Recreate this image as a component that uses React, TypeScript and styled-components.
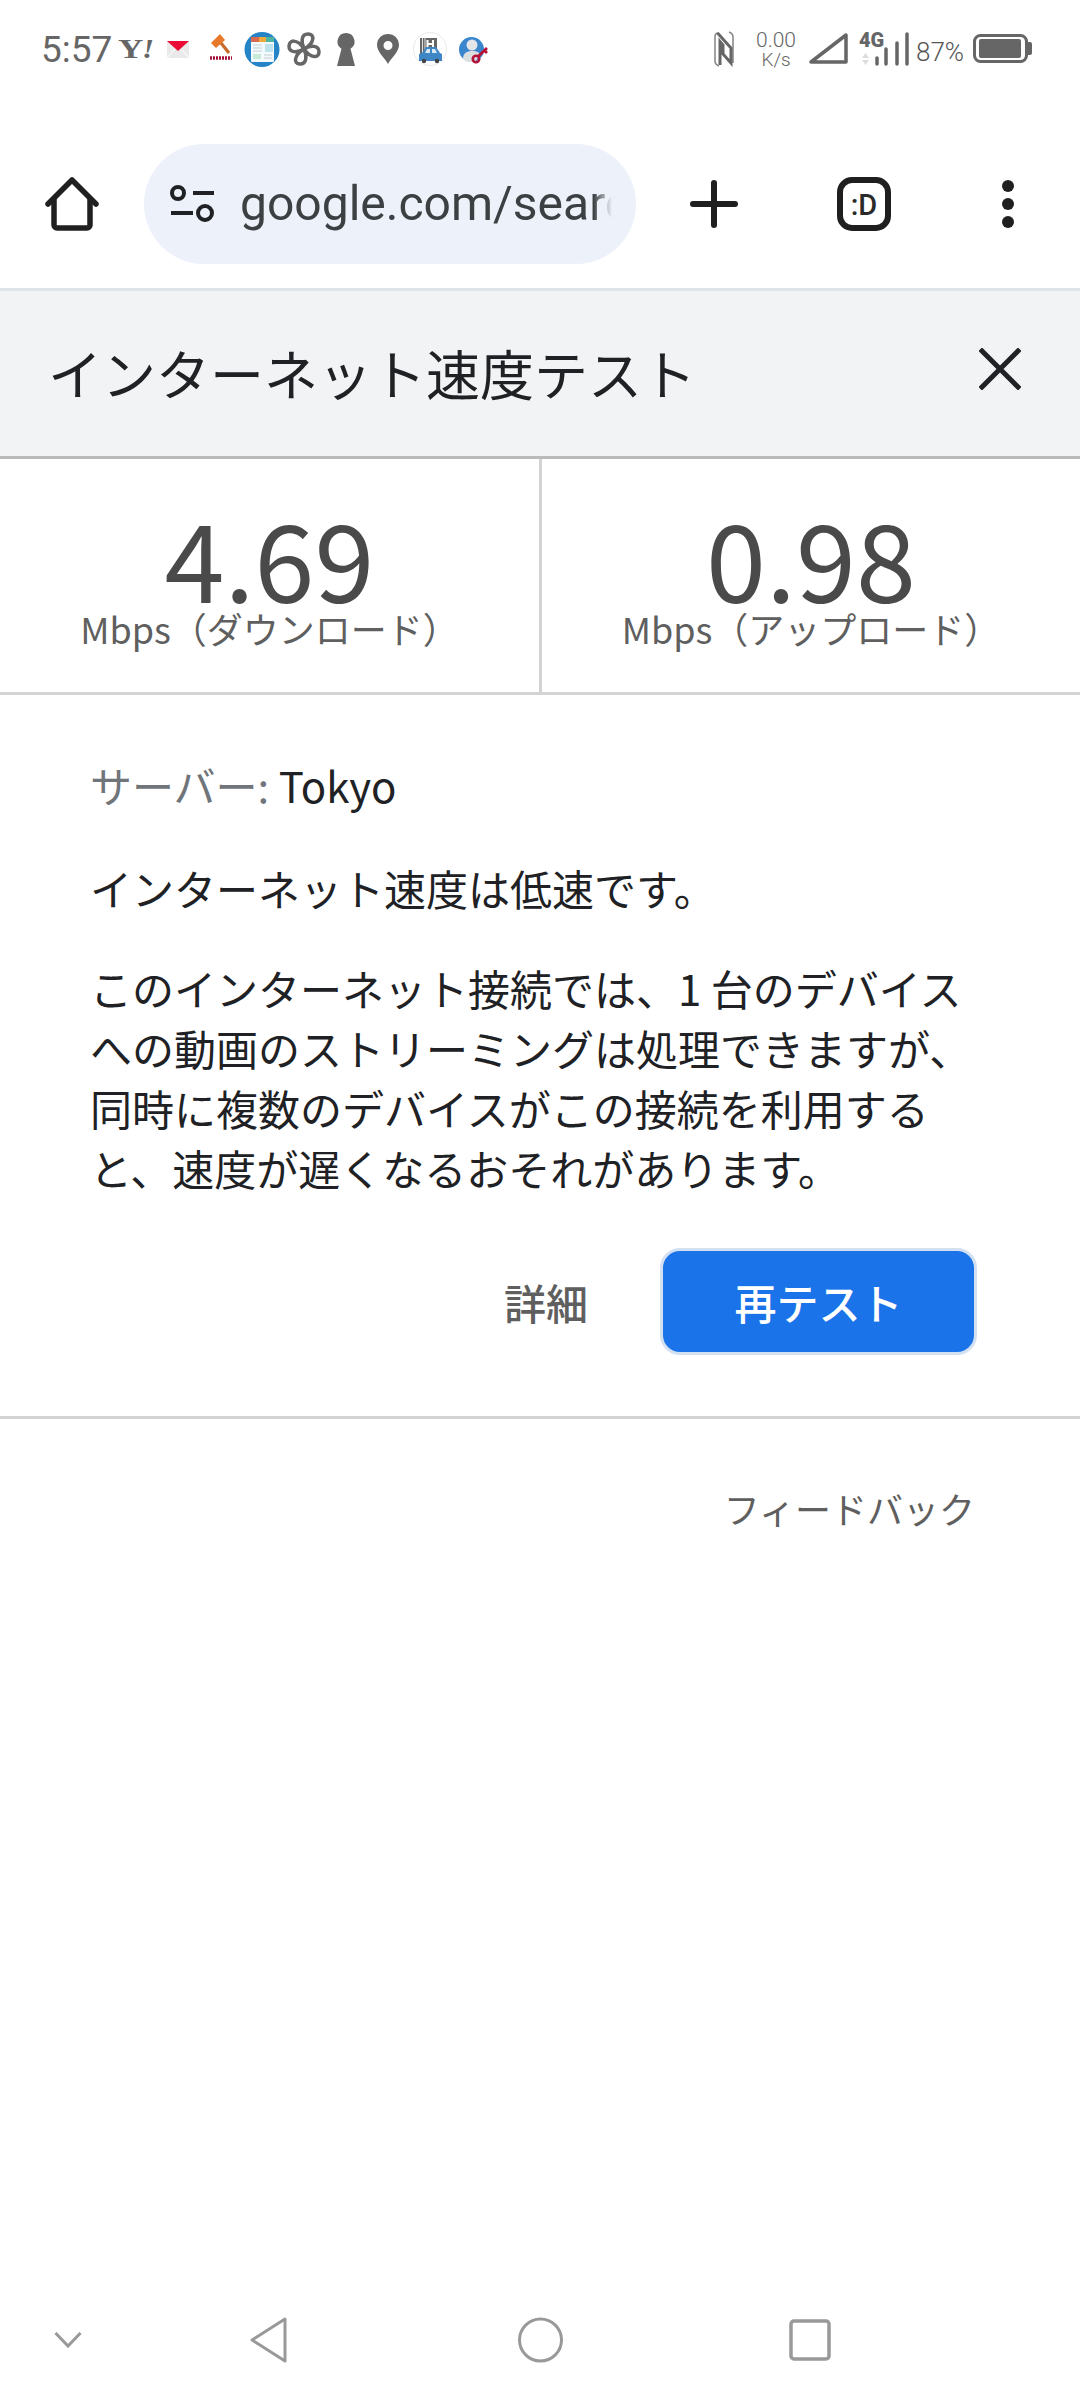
import React from "react";
import styled, { createGlobalStyle } from "styled-components";

const Global = createGlobalStyle`
  html, body { margin: 0; padding: 0; background: #fff; }
  body { font-family: "Noto Sans CJK JP", sans-serif; }
`;
const CJK = `"Noto Sans CJK JP", sans-serif`;
const ROBOTO = `"Roboto", "Noto Sans CJK JP", sans-serif`;

const Page = styled.div`
  width: 1080px; height: 2400px; display: flex; flex-direction: column; background: #fff; overflow: hidden;
`;
const StatusBar = styled.div`
  height: 100px; box-sizing: border-box; padding: 28px 48px 0 41px; display: flex; align-items: flex-start; flex-shrink: 0;
`;
const Time = styled.span`
  font: 400 37px/44px ${ROBOTO}; width: 75px; color: #666; flex-shrink: 0; white-space: nowrap;
`;
const StatusIcon = styled.svg<{ $gap?: number }>`
  flex-shrink: 0; margin-left: ${(p) => p.$gap ?? 0}px; display: block;
`;
const Spacer = styled.div` flex: 1; `;
const Speed = styled.div`
  width: 44px; margin-left: 20px; flex-shrink: 0; text-align: center; font: 300 21px/20px ${ROBOTO}; color: #666; display: flex; flex-direction: column; padding-top: 2px;
  span:last-child { font-size: 19px; line-height: 20px; }
`;
const Percent = styled.span`
  font: 300 26px/44px ${ROBOTO}; color: #555; width: 50px; margin-left: 7px; margin-right: 7px; flex-shrink: 0; padding-top: 2px; white-space: nowrap;
`;
const Toolbar = styled.div`
  height: 191px; box-sizing: border-box; padding: 44px 0 24px 0; display: flex; align-items: center; border-bottom: 3px solid #dde3e9; flex-shrink: 0;
`;
const IconButton = styled.div<{ $w: number }>`
  width: ${(p) => p.$w}px; height: 120px; display: flex; align-items: center; justify-content: center; flex-shrink: 0;
`;
const Omnibox = styled.div`
  width: 492px; height: 120px; border-radius: 60px; background: #edf1f9; display: flex; align-items: center; padding: 0 24px 0 26px; box-sizing: border-box; flex-shrink: 0;
`;
const TuneIcon = styled.svg` flex-shrink: 0; `;
const Url = styled.div`
  margin-left: 26px; font: 400 48px/60px ${ROBOTO}; color: #3c4043; white-space: nowrap; overflow: hidden; flex: 1;
  -webkit-mask-image: linear-gradient(to right, #000 95%, transparent 100%);
`;
const Header = styled.div`
  height: 165px; background: #f1f3f4; border-bottom: 3px solid #b8babb; display: flex; align-items: center; justify-content: space-between; padding: 0 59px 0 48px; flex-shrink: 0;
`;
const HeaderTitle = styled.div`
  font: 400 54px/70px ${CJK}; color: #202124; white-space: nowrap; margin-bottom: 2px;
`;
const CloseIcon = styled.svg` margin-bottom: 10px; `;
const Stats = styled.div`
  height: 233px; display: grid; grid-template-columns: 542px 1fr; border-bottom: 3px solid #d3d3d3; flex-shrink: 0;
`;
const Stat = styled.div<{ $divider?: boolean }>`
  display: flex; flex-direction: column; align-items: center; border-right: ${(p) => (p.$divider ? "3px solid #d3d3d3" : "none")}; box-sizing: border-box;
`;
const StatValue = styled.div`
  font: 400 108px/112px ${CJK}; color: #4a4a4a; margin-top: 41px; height: 112px;
`;
const StatLabel = styled.div`
  font: 400 36px/44px ${CJK}; color: #5f5f5f; margin-top: -6px; white-space: nowrap;
`;
const Body = styled.div`
  padding: 0 90px; border-bottom: 3px solid #d3d3d3; height: 724px; box-sizing: border-box; flex-shrink: 0; display: flex; flex-direction: column;
`;
const Server = styled.div`
  margin-top: 60px; font: 400 42px/60px ${CJK}; color: #202124; white-space: nowrap;
  span { color: #70757a; }
`;
const Para = styled.div<{ $top: number }>`
  margin-top: ${(p) => p.$top}px; font: 400 42px/60px ${CJK}; color: #202124; white-space: pre; 
`;
const Actions = styled.div`
  margin-top: 50px; margin-right: 13px; display: flex; align-items: center; justify-content: flex-end;
`;
const Details = styled.div`
  font: 500 42px/60px ${CJK}; color: #5f5f5f; margin-right: 72px;
`;
const Retest = styled.div`
  width: 317px; height: 107px; box-sizing: border-box; border-radius: 20px; background: #1a73e8; border: 3px solid #d3e0f2; color: #fff; font: 500 42px/60px ${CJK}; display: flex; align-items: center; justify-content: center;
`;
const Feedback = styled.div`
  margin-top: 63px; padding-right: 105px; text-align: right; font: 400 36px/52px ${CJK}; color: #5f5f5f;
`;
const Nav = styled.div`
  margin-top: auto; height: 121px; flex-shrink: 0; display: flex; align-items: center; padding-left: 54px; box-sizing: border-box;
`;
const NavSlot = styled.div<{ $w: number }>`
  width: ${(p) => p.$w}px; flex-shrink: 0; display: flex; align-items: center;
`;

const G = "#666";
const NAV = "#999";

export default function App() {
  return (
    <Page>
      <Global />
      <StatusBar>
        <Time>5:57</Time>
        <StatusIcon $gap={2} width="36" height="44" viewBox="0 0 36 44">
          <text transform="translate(0 30) scale(1.3 1)" fontFamily="Liberation Serif" fontWeight="700" fontSize="27" fill={G}>Y</text>
          <text transform="translate(24 30) scale(1.15 1)" fontFamily="Liberation Serif" fontWeight="700" fontStyle="italic" fontSize="27" fill={G}>!</text>
        </StatusIcon>
        <StatusIcon $gap={13} width="22" height="44" viewBox="0 0 22 44">
          <rect x="0" y="13" width="22" height="17" fill="#e9e9e9" />
          <path d="M0 30l8-9M22 30l-8-9" stroke="#f6f6f6" strokeWidth="1.500" />
          <path d="M0 13h22L11 23Z" fill="#ea0a35" />
        </StatusIcon>
        <StatusIcon $gap={21} width="22" height="44" viewBox="0 0 22 44">
          <path d="M1 15l9-9 5 6-9 8Z" fill="#e8792b" />
          <path d="M11 15l8 10" stroke="#c96a2b" strokeWidth="3.200" />
          <path d="M0 30h22" stroke="#a5123a" strokeWidth="3.500" strokeDasharray="2 1" />
        </StatusIcon>
        <StatusIcon $gap={12} width="36" height="44" viewBox="0 0 36 44">
          <circle cx="18" cy="21.500" r="17.500" fill="#2484c6" />
          <rect x="7" y="9" width="23" height="25" rx="1" fill="#f2fafd" />
          <rect x="7" y="9" width="8" height="5" fill="#d96a4f" />
          <rect x="15" y="9" width="7" height="5" fill="#eda93a" />
          <rect x="22" y="9" width="8" height="5" fill="#4eb6a0" />
          <rect x="21" y="16" width="8" height="8" fill="#bfe3ee" />
          <rect x="9" y="26" width="8" height="5" fill="#c9ead8" />
          <path d="M9 17h9M9 20h9M9 23h9M20 27h8M20 30h8" stroke="#c5ced3" strokeWidth="1" />
        </StatusIcon>
        <StatusIcon $gap={7} width="34" height="44" viewBox="0 0 34 44">
          <path d="M17 21C14 14 14 6 21 6c7 0 7 9-4 15ZM17 21c7-4 15-4 15 3 0 6-8 7-15-3ZM17 21c3 7 3 15-4 15-7 0-6-9 4-15ZM17 21c-7 4-15 4-15-3 0-6 8-8 15 3Z" fill="none" stroke={G} strokeWidth="3.500" strokeLinejoin="round" />
        </StatusIcon>
        <StatusIcon $gap={16} width="18" height="44" viewBox="0 0 18 44">
          <path d="M9 5a8.500 8.500 0 0 1 4.500 15.700L18 38H0l4.500-17.300A8.500 8.500 0 0 1 9 5Z" fill={G} />
        </StatusIcon>
        <StatusIcon $gap={22} width="22" height="44" viewBox="0 0 22 44">
          <path fillRule="evenodd" d="M11 6C5 6 0 10.500 0 17c0 7 8 13 11 19 3-6 11-12 11-19C22 10.500 17 6 11 6Zm0 7a4.500 4.500 0 1 1 0 9 4.500 4.500 0 0 1 0-9Z" fill={G} />
        </StatusIcon>
        <StatusIcon $gap={14} width="34" height="44" viewBox="0 0 34 44">
          <circle cx="17" cy="21" r="16.500" fill="#fff" stroke="#e9e9e9" />
          <rect x="7" y="10" width="17" height="18" fill={G} />
          <path d="M9.500 10v18M12 10v18" stroke="#fff" strokeWidth="0.800" />
          <path d="M14.500 12v9M20 12v9M14.500 16H20" stroke="#fff" strokeWidth="2" />
          <path d="M6 33v-7l3-1 4-6h10l4 6 2 1v7Z" fill="#3f86c7" />
          <path d="M14 21h3v4h-5ZM19 21h3l2 4h-5Z" fill="#d8e8f5" />
          <circle cx="11" cy="33" r="2.200" fill="#444" /><circle cx="24" cy="33" r="2.200" fill="#444" />
        </StatusIcon>
        <StatusIcon $gap={12} width="30" height="44" viewBox="0 0 30 44">
          <circle cx="12.500" cy="21.500" r="12.500" fill="#3a86cc" />
          <circle cx="13" cy="17" r="5.500" fill="#e3e5e8" />
          <path d="M4 31c0-6 4-8 9-8s7 1 8 4l-5 7h-6a12 12 0 0 1-6-3Z" fill="#dcdfe2" />
          <circle cx="17" cy="31" r="3.200" fill="none" stroke="#b5123a" strokeWidth="2.600" />
          <path d="M19 28.500 28 20M25 22l3 3" stroke="#b5123a" strokeWidth="2.800" />
        </StatusIcon>
        <Spacer />
        <StatusIcon width="20" height="44" viewBox="0 0 20 44">
          <path d="M4 5C1.500 5 1 7 1 9v24c0 2 1 4 4 5M15 4c3 1 4 3 4 5v26" fill="none" stroke="#8a8a8a" strokeWidth="1.600" />
          <path d="M3.500 5 17 20v15L9 26v-9l-3-3.500V37" fill="none" stroke={G} strokeWidth="3" />
        </StatusIcon>
        <Speed><span>0.00</span><span>K/s</span></Speed>
        <StatusIcon $gap={11} width="39" height="44" viewBox="0 0 39 44">
          <path d="M37 7v27H2Z" fill="none" stroke={G} strokeWidth="3.500" strokeLinejoin="round" />
        </StatusIcon>
        <StatusIcon $gap={11} width="50" height="44" viewBox="0 0 50 44">
          <text x="0" y="19" fontFamily="Roboto" fontWeight="900" fontSize="20" fill={G}>4G</text>
          <path d="M3 30l3.500-5 3.500 5ZM3 32l3.500 5 3.500-5Z" fill="#dcdcdc" />
          <path d="M18 30v6M27 21v15M38 15v21M48 6v30" stroke={G} strokeWidth="3.500" strokeLinecap="round" />
        </StatusIcon>
        <Percent>87%</Percent>
        <StatusIcon width="59" height="44" viewBox="0 0 59 44">
          <rect x="1.500" y="7.500" width="52" height="26" rx="6" fill="none" stroke={G} strokeWidth="3" />
          <rect x="6" y="11" width="42" height="19" rx="2" fill={G} />
          <path d="M55 14h2a2 2 0 0 1 2 2v9a2 2 0 0 1-2 2h-2z" fill={G} />
        </StatusIcon>
      </StatusBar>

      <Toolbar>
        <IconButton $w={144}>
          <svg width="54" height="54" viewBox="0 0 54 54" fill="none" stroke="#202020" strokeWidth="5.500" strokeLinejoin="round" strokeLinecap="round">
            <path d="M3 27 27 3l24 24" />
            <path d="M9 22v26a3 3 0 0 0 3 3h30a3 3 0 0 0 3-3V22" />
          </svg>
        </IconButton>
        <Omnibox>
          <TuneIcon width="44" height="38" viewBox="0 0 44 38" fill="none" stroke="#202124" strokeWidth="4">
            <circle cx="8" cy="8" r="6" />
            <path d="M23 8h21M1 28h22" />
            <circle cx="35" cy="28" r="7" />
          </TuneIcon>
          <Url>google.com/search?q=speed</Url>
        </Omnibox>
        <IconButton $w={156}>
          <svg width="48" height="48" viewBox="0 0 48 48" stroke="#1f1f1f" strokeWidth="6" strokeLinecap="round"><path d="M24 3v42M3 24h42" /></svg>
        </IconButton>
        <IconButton $w={144}>
          <svg width="54" height="54" viewBox="0 0 54 54">
            <rect x="3" y="3" width="48" height="48" rx="12" fill="none" stroke="#1f1f1f" strokeWidth="6" />
            <text x="27" y="38" textAnchor="middle" fontFamily="Roboto" fontWeight="500" fontSize="29" fill="#2a2a2a">:D</text>
          </svg>
        </IconButton>
        <IconButton $w={144}>
          <svg width="12" height="48" viewBox="0 0 12 48" fill="#1f1f1f"><circle cx="6" cy="6" r="6" /><circle cx="6" cy="24" r="6" /><circle cx="6" cy="42" r="6" /></svg>
        </IconButton>
      </Toolbar>

      <Header>
        <HeaderTitle>インターネット速度テスト</HeaderTitle>
        <CloseIcon width="42" height="42" viewBox="0 0 42 42" stroke="#202124" strokeWidth="5" strokeLinecap="square"><path d="M3 3l36 36M39 3 3 39" /></CloseIcon>
      </Header>

      <Stats>
        <Stat $divider>
          <StatValue>4.69</StatValue>
          <StatLabel>Mbps（ダウンロード）</StatLabel>
        </Stat>
        <Stat>
          <StatValue>0.98</StatValue>
          <StatLabel>Mbps（アップロード）</StatLabel>
        </Stat>
      </Stats>

      <Body>
        <Server><span>サーバー: </span>Tokyo</Server>
        <Para $top={43}>インターネット速度は低速です。</Para>
        <Para $top={40}>{"このインターネット接続では、1 台のデバイス\nへの動画のストリーミングは処理できますが、\n同時に複数のデバイスがこの接続を利用する\nと、速度が遅くなるおそれがあります。"}</Para>
        <Actions>
          <Details>詳細</Details>
          <Retest>再テスト</Retest>
        </Actions>
      </Body>

      <Feedback>フィードバック</Feedback>

      <Nav>
        <NavSlot $w={196}>
          <svg width="28" height="16" viewBox="0 0 28 16" fill="none" stroke={NAV} strokeWidth="3"><path d="M1.500 1 14 14 26.500 1" /></svg>
        </NavSlot>
        <NavSlot $w={268}>
          <svg width="37" height="46" viewBox="0 0 37 46" fill="none" stroke={NAV} strokeWidth="3" strokeLinejoin="round"><path d="M35 2v42L2 23Z" /></svg>
        </NavSlot>
        <NavSlot $w={271}>
          <svg width="45" height="46" viewBox="0 0 45 46" fill="none" stroke={NAV} strokeWidth="3"><circle cx="22.500" cy="23" r="21" /></svg>
        </NavSlot>
        <NavSlot $w={50}>
          <svg width="42" height="42" viewBox="0 0 42 42" fill="none" stroke={NAV} strokeWidth="3.500"><rect x="2" y="2" width="38" height="38" rx="3" /></svg>
        </NavSlot>
      </Nav>
    </Page>
  );
}
